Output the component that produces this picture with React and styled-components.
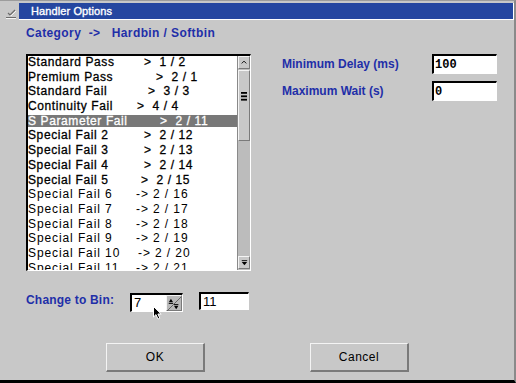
import React from 'react';
import styled, { createGlobalStyle } from 'styled-components';

const GlobalStyle = createGlobalStyle`
  html, body {
    margin: 0;
    padding: 0;
    background: #c8c8c8;
  }
  body {
    font-family: "Liberation Sans", Arial, sans-serif;
  }
`;

const bins = [
  { name: 'Standard Pass', map: '>  1 / 2', col: 116, bold: true },
  { name: 'Premium Pass', map: '>  2 / 1', col: 128, bold: true },
  { name: 'Standard Fail', map: '>  3 / 3', col: 120, bold: true },
  { name: 'Continuity Fail', map: '>  4 / 4', col: 109, bold: true },
  { name: 'S Parameter Fail', map: '>  2 / 11', col: 132, bold: true, selected: true },
  { name: 'Special Fail 2', map: '>  2 / 12', col: 116, bold: true },
  { name: 'Special Fail 3', map: '>  2 / 13', col: 116, bold: true },
  { name: 'Special Fail 4', map: '>  2 / 14', col: 116, bold: true },
  { name: 'Special Fail 5', map: '>  2 / 15', col: 113, bold: true },
  { name: 'Special Fail 6', map: '-> 2 / 16', col: 108 },
  { name: 'Special Fail 7', map: '-> 2 / 17', col: 108 },
  { name: 'Special Fail 8', map: '-> 2 / 18', col: 108 },
  { name: 'Special Fail 9', map: '-> 2 / 19', col: 108 },
  { name: 'Special Fail 10', map: '-> 2 / 20', col: 110 },
  { name: 'Special Fail 11', map: '-> 2 / 21', col: 108 },
];

const App = () => {
  return (
    <>
      <GlobalStyle />
      <Window>
        <TitleBar>
          <SysIcon>
            <svg width="19" height="17" viewBox="0 0 19 17">
              <polyline points="8,10 10,12 15,7" fill="none" stroke="#f4f4f4" strokeWidth="1" transform="translate(1,1)" />
              <polyline points="8,10 10,12 15,7" fill="none" stroke="#6a6a6a" strokeWidth="1.2" />
              <line x1="6" y1="14.5" x2="16" y2="14.5" stroke="#6a6a6a" strokeWidth="1" />
              <line x1="6" y1="15.5" x2="16" y2="15.5" stroke="#f4f4f4" strokeWidth="1" />
            </svg>
          </SysIcon>
          <Caption>Handler Options</Caption>
        </TitleBar>

        <Body>
          <Heading>{'Category  ->   Hardbin / Softbin'}</Heading>

          <MainRow>
            <ListBox>
              <Items>
                {bins.map((b) => (
                  <Row key={b.name} $selected={b.selected} $bold={b.bold}>
                    <BinName $col={b.col}>{b.name}</BinName>
                    <BinMap>{b.map}</BinMap>
                  </Row>
                ))}
              </Items>
              <ScrollBar>
                <ArrowButton>
                  <svg width="11" height="11" viewBox="0 0 11 11">
                    <polyline points="3,6.5 5.5,4 8,6.5" fill="none" stroke="#000" strokeWidth="1" />
                  </svg>
                </ArrowButton>
                <Thumb>
                  <svg width="6" height="9" viewBox="0 0 6 9">
                    <rect x="0" y="0" width="6" height="1.8" fill="#000" />
                    <rect x="0" y="3.4" width="6" height="1.8" fill="#000" />
                    <rect x="0" y="6.8" width="6" height="1.8" fill="#000" />
                  </svg>
                </Thumb>
                <Track />
                <ArrowButton>
                  <svg width="11" height="11" viewBox="0 0 11 11">
                    <rect x="3" y="3" width="6" height="1" fill="#000" />
                    <polygon points="3,5 9,5 6,8.5" fill="#000" />
                  </svg>
                </ArrowButton>
              </ScrollBar>
            </ListBox>

            <Settings>
              <FormRow>
                <FieldLabel>Minimum Delay (ms)</FieldLabel>
                <Field value="100" readOnly />
              </FormRow>
              <FormRow>
                <FieldLabel>Maximum Wait (s)</FieldLabel>
                <Field value="0" readOnly />
              </FormRow>
            </Settings>
          </MainRow>

          <BinRow>
            <BinLabel>Change to Bin:</BinLabel>
            <SpinBox>
              <SpinText>7</SpinText>
              <SpinButton>
                <svg width="16" height="16" viewBox="0 0 16 16">
                  <line x1="0" y1="16" x2="16" y2="0" stroke="#5a5a5a" strokeWidth="1" />
                  <polygon points="2,6 7,6 4.5,2" fill="#000" />
                  <rect x="2" y="7" width="5" height="1" fill="#000" />
                  <rect x="8" y="8" width="5" height="1" fill="#000" />
                  <polygon points="8,10 13,10 10.5,14" fill="#000" />
                </svg>
              </SpinButton>
              <Cursor>
                <svg width="10" height="14" viewBox="0 0 10 14">
                  <path d="M0.5 0.5 L0.5 11 L3 8.6 L5 13 L6.8 12.2 L4.9 8 L8.2 8 Z" fill="#000" stroke="#fff" strokeWidth="1" />
                </svg>
              </Cursor>
            </SpinBox>
            <SoftBox>11</SoftBox>
          </BinRow>

          <ButtonRow>
            <PushButton>OK</PushButton>
            <PushButton>Cancel</PushButton>
          </ButtonRow>
        </Body>
      </Window>
    </>
  );
};

export default App;

const Window = styled.div`
  width: 516px;
  height: 383px;
  box-sizing: border-box;
  background: #c8c8c8;
  border-top: 1px solid #9c9c9c;
  border-right: 2px solid #8a8a8a;
  border-bottom: 3px solid #000;
  overflow: hidden;
`;

const TitleBar = styled.div`
  display: flex;
  padding-top: 2px;
  height: 17px;
`;

const SysIcon = styled.div`
  width: 19px;
  flex: 0 0 19px;
  display: flex;
  align-items: flex-start;
`;

const Caption = styled.div`
  flex: 1;
  height: 16px;
  line-height: 16px;
  background: #2546a0;
  border-right: 1px solid #fff;
  border-bottom: 1px solid #fff;
  padding-left: 12px;
  color: #fff;
  font-size: 11px;
  letter-spacing: 0.1px;
  -webkit-text-stroke: 0.35px #fff;
`;

const Body = styled.div`
  padding-left: 26px;
`;

const Heading = styled.div`
  margin-top: 6px;
  height: 14px;
  line-height: 14px;
  white-space: pre;
  color: #1f2fa8;
  font-weight: bold;
  font-size: 12px;
  letter-spacing: 0.4px;
`;

const MainRow = styled.div`
  display: flex;
  margin-top: 14px;
`;

const ListBox = styled.div`
  display: flex;
  width: 225px;
  height: 217px;
  box-sizing: border-box;
  background: #fff;
  border-top: 2px solid #000;
  border-left: 2px solid #000;
  border-bottom: 1px solid #fff;
  border-right: 1px solid #fff;
`;

const Items = styled.div`
  flex: 1;
  overflow: hidden;
`;

const Row = styled.div`
  display: flex;
  height: 14.7px;
  line-height: 13px;
  font-size: 12px;
  white-space: pre;
  letter-spacing: ${({ $bold }) => ($bold ? '0.6px' : '0.9px')};
  -webkit-text-stroke: ${({ $bold, $selected }) =>
    $bold ? `0.3px ${$selected ? '#fff' : '#000'}` : '0'};
  color: ${({ $selected }) => ($selected ? '#fff' : '#000')};
  background: ${({ $selected }) =>
    $selected ? 'linear-gradient(#787878 0 12px, transparent 12px)' : 'transparent'};
`;

const BinName = styled.span`
  flex: 0 0 ${({ $col }) => $col}px;
  overflow: hidden;
`;

const BinMap = styled.span`
  white-space: pre;
`;

const ScrollBar = styled.div`
  width: 13px;
  display: flex;
  flex-direction: column;
  background: #bcbcbc;
  border-left: 1px solid #8a8a8a;
  padding-bottom: 1px;
  box-sizing: border-box;
`;

const bevel = `
  box-sizing: border-box;
  background: #c8c8c8;
  border-top: 1px solid #f4f4f4;
  border-left: 1px solid #f4f4f4;
  border-bottom: 1px solid #7a7a7a;
  border-right: 1px solid #7a7a7a;
`;

const ArrowButton = styled.div`
  ${bevel}
  height: 13px;
  display: flex;
  align-items: center;
  justify-content: center;
`;

const Thumb = styled.div`
  ${bevel}
  height: 71px;
  margin-top: 1px;
  display: flex;
  justify-content: center;
  padding-top: 21px;
`;

const Track = styled.div`
  flex: 1;
`;

const Settings = styled.div`
  display: flex;
  flex-direction: column;
  gap: 7px;
  margin-left: 31px;
`;

const FormRow = styled.div`
  display: flex;
  align-items: center;
`;

const FieldLabel = styled.span`
  width: 150px;
  color: #1f2fa8;
  font-weight: bold;
  font-size: 12px;
`;

const sunken = `
  box-sizing: border-box;
  background: #fff;
  border-top: 2px solid #000;
  border-left: 2px solid #000;
  border-bottom: 1px solid #fff;
  border-right: 1px solid #fff;
  outline: none;
`;

const Field = styled.input`
  ${sunken}
  width: 65px;
  height: 20px;
  margin: 0;
  padding: 0 0 0 1px;
  font-family: "Liberation Mono", "Courier New", monospace;
  font-weight: bold;
  font-size: 12px;
  color: #000;
`;

const BinRow = styled.div`
  display: flex;
  align-items: flex-start;
  margin-top: 21px;
  height: 20px;
`;

const BinLabel = styled.span`
  width: 104px;
  line-height: 17px;
  color: #1f2fa8;
  font-weight: bold;
  font-size: 12px;
  letter-spacing: 0.2px;
`;

const SpinBox = styled.div`
  ${sunken}
  position: relative;
  display: flex;
  width: 53px;
  height: 19px;
  margin-top: 1px;
`;

const SpinText = styled.span`
  flex: 1;
  padding-left: 2px;
  line-height: 16px;
  font-size: 13px;
  color: #000;
`;

const SpinButton = styled.div`
  ${bevel}
  background: #b8b8b8;
  width: 16px;
  height: 16px;
  display: flex;
`;

const Cursor = styled.div`
  position: absolute;
  left: 21px;
  top: 11px;
  line-height: 0;
`;

const SoftBox = styled.div`
  ${sunken}
  width: 50px;
  height: 18px;
  margin-left: 16px;
  padding-left: 2px;
  line-height: 15px;
  font-size: 13px;
  color: #000;
`;

const ButtonRow = styled.div`
  display: flex;
  gap: 105px;
  margin-top: 31px;
  padding-left: 80px;
`;

const PushButton = styled.button`
  width: 99px;
  height: 29px;
  margin: 0;
  padding: 0;
  box-sizing: border-box;
  background: #c8c8c8;
  border-style: solid;
  border-width: 1px 2px 2px 1px;
  border-color: #f4f4f4 #7a7a7a #7a7a7a #f4f4f4;
  font-family: "Liberation Sans", Arial, sans-serif;
  font-size: 12px;
  letter-spacing: 0.5px;
  color: #000;
`;
